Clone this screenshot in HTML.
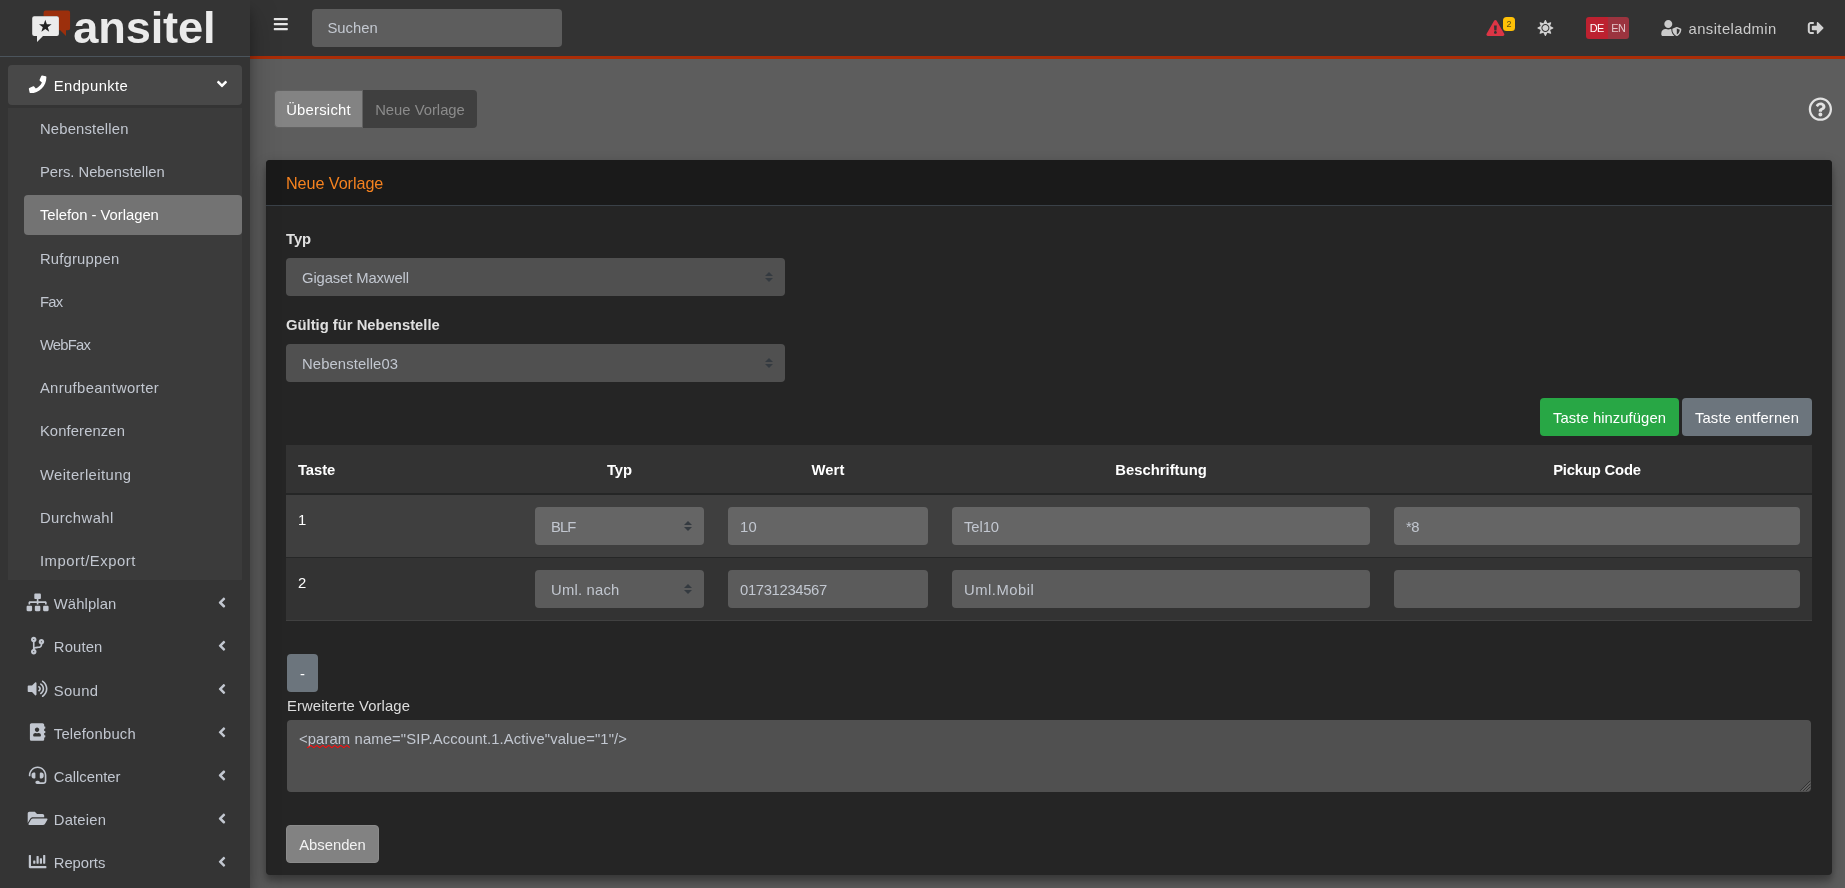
<!DOCTYPE html>
<html lang="de">
<head>
<meta charset="utf-8">
<title>ansitel - Telefon - Vorlagen</title>
<style>
*{box-sizing:border-box;margin:0;padding:0}
html,body{width:1845px;height:888px;overflow:hidden}
body{font-family:"Liberation Sans",sans-serif;font-size:14.8px;line-height:24px;color:#fff;background:#5d5d5d;position:relative}
.abs{position:absolute}
svg.ic{display:block;position:absolute}
.t{position:absolute;white-space:nowrap;line-height:24px;height:24px}
/* sidebar */
#sidebar{will-change:transform;position:absolute;left:0;top:0;width:250px;height:888px;background:#343434;z-index:30;box-shadow:0 14px 28px rgba(0,0,0,.25),0 10px 10px rgba(0,0,0,.22)}
#brand{position:absolute;left:0;top:0;width:250px;height:57px;border-bottom:1px solid #4b545c}
#brandtxt{position:absolute;left:73.3px;top:2.5px;font-weight:bold;font-size:45.2px;line-height:50px;color:#ebebeb;letter-spacing:-0.15px}
.ni{position:absolute;left:8px;width:234px;height:40px;border-radius:4px;color:#c2c7d0}
.ni .t{left:45.8px;top:9px}
.ni.open{background:#484848;color:#fff}
.ni .chev{position:absolute;left:210px;top:11.2px;width:8px;height:16px}
#tree{position:absolute;left:8px;top:108px;width:234px;height:472px;background:#3b3b3b}
.si{position:absolute;left:16px;width:218px;height:40px;border-radius:4px;color:#c2c7d0}
.si .t{left:15.9px;top:9px}
.si.act{background:#737373;color:#fff}
/* navbar */
#navbar{will-change:transform;position:absolute;left:250px;top:0;width:1595px;height:59px;background:#333;border-bottom:3px solid #aa2d07;z-index:20;color:#cbcbcb}
#search{position:absolute;left:62px;top:9px;width:250px;height:38px;border-radius:4px;background:#5d5d5d;color:#c4c9d1}
/* content */
#content{position:absolute;left:250px;top:59px;width:1595px;height:829px;background:#5d5d5d;z-index:10}
.btn{will-change:transform;position:absolute;height:38px;border-radius:4px;text-align:center;line-height:40px;white-space:nowrap;overflow:hidden}
#card{will-change:transform;position:absolute;left:266px;top:160px;width:1566px;height:715px;background:#252525;border-radius:4px;z-index:15;box-shadow:0 10px 20px rgba(0,0,0,.19),0 6px 6px rgba(0,0,0,.23),0 0 8px rgba(0,0,0,.1)}
#chead{position:absolute;left:0;top:0;width:1566px;height:46px;background:#1a1a1a;border-bottom:1px solid #3a4148;border-radius:4px 4px 0 0}
.inp{position:absolute;height:38px;border-radius:4px;background:rgba(255,255,255,.2);color:#c2c7d0}
.inp .t{left:16px;top:7.5px}
.inp.tx .t{left:12px}
.arr{position:absolute;right:12px;top:14px;width:8px;height:10px}
.lbl{font-weight:bold;color:#fff}

.sic{position:absolute;left:0;top:0;color:#c2c7d0;z-index:2}
.sic.w{color:#fff}

</style>
</head>
<body>
<aside id="sidebar">
 <div id="brand">
  <svg class="abs" style="left:30px;top:8px" width="44" height="38" viewBox="30 8 44 38">
   <path fill="#9c2f0c" d="M45.6 10.5H68.1a2 2 0 0 1 2 2V28.2a2 2 0 0 1-2 2H66V36L60.2 30.2H58V16.200H43.600V12.500a2 2 0 0 1 2-2z"/>
   <path fill="#ebebeb" d="M34.200 16.200H56.900a2 2 0 0 1 2 2V33.900a2 2 0 0 1-2 2H43L37 42V35.900H34.200a2 2 0 0 1-2-2V18.200a2 2 0 0 1 2-2z"/>
   <path fill="#222" d="M45.300 19.800l1.550 4.500h4.750l-3.800 2.850 1.400 4.550-3.900-2.750-3.900 2.750 1.400-4.550-3.800-2.850h4.750z"/>
  </svg>
  <div id="brandtxt">ansitel</div>
 </div>
 <div class="sic w"><svg class="ic" viewBox="-23.27 -14.55 552.73 552.73" width="19" height="19" style="left:28px;top:75px"><path fill="currentColor" d="M493.4 24.6l-104-24c-11.300-2.600-22.900 3.300-27.500 13.900l-48 112c-4.200 9.800-1.400 21.300 6.900 28l60.600 49.600c-36 76.700-98.900 140.500-177.200 177.200l-49.600-60.600c-6.800-8.300-18.200-11.100-28-6.900l-112 48C3.900 366.500-2 378.100.6 389.400l24 104C27.100 504.200 36.700 512 48 512c256.100 0 464-207.500 464-464 0-11.200-7.700-20.900-18.600-23.400z"/></svg></div><div class="ni open" style="top:65px"><span class="t" style="top:9.00px"><span style="letter-spacing:0.41px">Endpunkte</span></span><div class="chev" style="transform:rotate(-90deg)"><svg class="ic" viewBox="-0.00 -0.00 256.00 512.00" width="8" height="16" style="left:0px;top:0px"><path fill="currentColor" d="M31.7 239l136-136c9.4-9.4 24.6-9.4 33.9 0l22.6 22.6c9.4 9.4 9.4 24.6 0 33.9L127.9 256l96.4 96.4c9.4 9.4 9.4 24.6 0 33.9L201.7 409c-9.4 9.4-24.6 9.4-33.9 0l-136-136c-9.5-9.400-9.5-24.600-.1-34z"/></svg></div></div>
 <div id="tree">
  <div class="si" style="top:0.2px"><span class="t" style="top:8.80px"><span style="letter-spacing:0.20px">Nebenstellen</span></span></div>
  <div class="si" style="top:43.4px"><span class="t" style="top:8.60px"><span style="letter-spacing:-0.01px">Pers. Nebenstellen</span></span></div>
  <div class="si act" style="top:86.6px"><span class="t" style="top:8.40px"><span style="letter-spacing:-0.02px">Telefon - Vorlagen</span></span></div>
  <div class="si" style="top:129.800px"><span class="t" style="top:9.20px"><span style="letter-spacing:0.21px">Rufgruppen</span></span></div>
  <div class="si" style="top:173px"><span class="t" style="top:9.00px"><span style="letter-spacing:-0.65px">Fax</span></span></div>
  <div class="si" style="top:216.2px"><span class="t" style="top:8.80px"><span style="letter-spacing:-0.78px">WebFax</span></span></div>
  <div class="si" style="top:259.400px"><span class="t" style="top:8.60px"><span style="letter-spacing:0.36px">Anrufbeantworter</span></span></div>
  <div class="si" style="top:302.600px"><span class="t" style="top:8.40px"><span style="letter-spacing:0.11px">Konferenzen</span></span></div>
  <div class="si" style="top:345.800px"><span class="t" style="top:9.20px"><span style="letter-spacing:0.42px">Weiterleitung</span></span></div>
  <div class="si" style="top:389px"><span class="t" style="top:9.00px"><span style="letter-spacing:0.43px">Durchwahl</span></span></div>
  <div class="si" style="top:432.2px"><span class="t" style="top:8.80px"><span style="letter-spacing:0.56px">Import/Export</span></span></div>
 </div>
 <div class="sic"><svg class="ic" viewBox="-0.00 -19.20 256.00 544.00" width="8" height="17" style="left:218px;top:594px"><path fill="currentColor" d="M31.7 239l136-136c9.4-9.4 24.6-9.4 33.9 0l22.6 22.6c9.4 9.4 9.4 24.6 0 33.9L127.9 256l96.4 96.4c9.4 9.4 9.4 24.6 0 33.9L201.7 409c-9.4 9.4-24.6 9.4-33.9 0l-136-136c-9.5-9.400-9.5-24.600-.1-34z"/></svg><svg class="ic" viewBox="-17.45 -17.45 669.09 552.73" width="23" height="19" style="left:26px;top:593px"><path fill="currentColor" d="M128 352H32c-17.670 0-32 14.330-32 32v96c0 17.670 14.330 32 32 32h96c17.670 0 32-14.330 32-32v-96c0-17.670-14.330-32-32-32zm-24-80h192v48h48v-48h192v48h48v-57.590c0-21.170-17.230-38.410-38.410-38.410H344v-64h40c17.670 0 32-14.330 32-32V32c0-17.670-14.330-32-32-32H256c-17.670 0-32 14.330-32 32v96c0 17.670 14.330 32 32 32h40v64H94.410C73.230 224 56 241.230 56 262.410V320h48v-48zm264 80h-96c-17.670 0-32 14.330-32 32v96c0 17.670 14.330 32 32 32h96c17.670 0 32-14.330 32-32v-96c0-17.670-14.330-32-32-32zm240 0h-96c-17.670 0-32 14.330-32 32v96c0 17.670 14.330 32 32 32h96c17.670 0 32-14.330 32-32v-96c0-17.670-14.330-32-32-32z"/></svg></div><div class="ni" style="top:583.400px"><span class="t" style="top:8.60px"><span style="letter-spacing:0.11px">Wählplan</span></span></div>
 <div class="sic"><svg class="ic" viewBox="-0.00 -25.60 256.00 544.00" width="8" height="17" style="left:218px;top:637px"><path fill="currentColor" d="M31.7 239l136-136c9.4-9.4 24.6-9.4 33.9 0l22.6 22.6c9.4 9.4 9.4 24.6 0 33.9L127.9 256l96.4 96.4c9.4 9.4 9.4 24.6 0 33.9L201.7 409c-9.4 9.4-24.6 9.4-33.9 0l-136-136c-9.5-9.400-9.5-24.600-.1-34z"/></svg><svg class="ic" viewBox="-0.00 -23.27 407.27 552.73" width="14" height="19" style="left:31px;top:636px"><path fill="currentColor" d="M384 144c0-44.200-35.800-80-80-80s-80 35.800-80 80c0 36.400 24.300 67.100 57.500 76.800-.6 16.100-4.200 28.500-11 36.900-15.400 19.200-49.300 22.400-85.200 25.700-28.200 2.600-57.400 5.400-81.300 16.900v-144c32.500-10.200 56-40.500 56-76.300 0-44.200-35.800-80-80-80S0 35.800 0 80c0 35.800 23.500 66.100 56 76.300v199.300C23.500 365.900 0 396.200 0 432c0 44.200 35.800 80 80 80s80-35.800 80-80c0-34-21.200-63.100-51.200-74.600 3.100-5.200 7.800-9.800 14.900-13.400 16.200-8.200 40.400-10.400 66.100-12.800 42.200-3.900 90-8.400 118.200-43.400 14-17.400 21.100-39.800 21.600-67.900 31.600-10.800 54.400-40.700 54.400-75.900zM80 64c8.800 0 16 7.200 16 16s-7.200 16-16 16-16-7.200-16-16 7.200-16 16-16zm0 384c-8.800 0-16-7.200-16-16s7.200-16 16-16 16 7.200 16 16-7.200 16-16 16zm224-320c8.800 0 16 7.200 16 16s-7.200 16-16 16-16-7.200-16-16 7.200-16 16-16z"/></svg></div><div class="ni" style="top:626.600px"><span class="t" style="top:8.40px"><span style="letter-spacing:0.16px">Routen</span></span></div>
 <div class="sic"><svg class="ic" viewBox="-0.00 -0.00 256.00 512.00" width="8" height="16" style="left:218px;top:681px"><path fill="currentColor" d="M31.7 239l136-136c9.4-9.4 24.6-9.4 33.9 0l22.6 22.6c9.4 9.4 9.4 24.6 0 33.9L127.9 256l96.4 96.4c9.4 9.4 9.4 24.6 0 33.9L201.7 409c-9.4 9.4-24.6 9.4-33.9 0l-136-136c-9.5-9.400-9.5-24.600-.1-34z"/></svg><svg class="ic" viewBox="-20.36 -0.00 610.91 523.64" width="21" height="18" style="left:27px;top:680px"><path fill="currentColor" d="M215.030 71.050L126.060 160H24c-13.260 0-24 10.740-24 24v144c0 13.250 10.740 24 24 24h102.060l88.970 88.950c15.030 15.030 40.970 4.470 40.970-16.970V88.020c0-21.460-25.960-31.980-40.970-16.970zm233.320-51.080c-11.170-7.330-26.180-4.240-33.510 6.950-7.340 11.170-4.220 26.180 6.950 33.510 66.270 43.490 105.820 116.600 105.820 195.580 0 78.980-39.550 152.090-105.820 195.580-11.170 7.320-14.290 22.340-6.950 33.500 7.040 10.710 21.930 14.560 33.510 6.950C528.270 439.580 576 351.330 576 256S528.270 72.430 448.350 19.970zM480 256c0-63.530-32.060-121.940-85.770-156.240-11.190-7.140-26.030-3.820-33.120 7.460s-3.780 26.210 7.410 33.360C408.270 165.970 432 209.110 432 256s-23.730 90.030-63.480 115.420c-11.190 7.140-14.500 22.070-7.410 33.360 6.510 10.360 21.120 15.140 33.120 7.460C447.940 377.940 480 319.540 480 256zm-141.770-76.870c-11.580-6.330-26.190-2.160-32.610 9.450-6.390 11.610-2.160 26.200 9.450 32.610C327.980 228.280 336 241.630 336 256c0 14.380-8.020 27.720-20.920 34.810-11.610 6.410-15.840 21-9.450 32.610 6.430 11.660 21.050 15.800 32.610 9.450 28.230-15.550 45.770-45 45.770-76.880s-17.540-61.320-45.780-76.860z"/></svg></div><div class="ni" style="top:669.800px"><span class="t" style="top:9.20px"><span style="letter-spacing:0.35px">Sound</span></span></div>
 <div class="sic"><svg class="ic" viewBox="-0.00 -6.40 256.00 544.00" width="8" height="17" style="left:218px;top:724px"><path fill="currentColor" d="M31.7 239l136-136c9.4-9.4 24.6-9.4 33.9 0l22.6 22.6c9.4 9.4 9.4 24.6 0 33.9L127.9 256l96.4 96.4c9.4 9.4 9.4 24.6 0 33.9L201.7 409c-9.4 9.4-24.6 9.4-33.9 0l-136-136c-9.5-9.400-9.5-24.600-.1-34z"/></svg><svg class="ic" viewBox="-26.18 -5.82 494.55 523.64" width="17" height="18" style="left:29px;top:723px"><path fill="currentColor" d="M436 160c6.600 0 12-5.400 12-12v-40c0-6.600-5.400-12-12-12h-20V48c0-26.500-21.500-48-48-48H48C21.500 0 0 21.500 0 48v416c0 26.500 21.500 48 48 48h320c26.500 0 48-21.500 48-48v-48h20c6.600 0 12-5.400 12-12v-40c0-6.600-5.400-12-12-12h-20v-64h20c6.600 0 12-5.400 12-12v-40c0-6.600-5.400-12-12-12h-20v-64h20zm-228-32c35.300 0 64 28.700 64 64s-28.700 64-64 64-64-28.700-64-64 28.700-64 64-64zm112 236.800c0 10.600-10 19.200-22.400 19.200H118.400C106 384 96 375.400 96 364.800v-19.200c0-31.800 30.100-57.600 67.200-57.600h5c12.300 5.100 25.700 8 39.800 8s27.600-2.900 39.800-8h5c37.100 0 67.200 25.800 67.200 57.600v19.200z"/></svg></div><div class="ni" style="top:713px"><span class="t" style="top:9.00px"><span style="letter-spacing:0.21px">Telefonbuch</span></span></div>
 <div class="sic"><svg class="ic" viewBox="-0.00 -12.80 256.00 544.00" width="8" height="17" style="left:218px;top:767px"><path fill="currentColor" d="M31.7 239l136-136c9.4-9.4 24.6-9.4 33.9 0l22.6 22.6c9.4 9.4 9.4 24.6 0 33.9L127.9 256l96.4 96.4c9.4 9.4 9.4 24.6 0 33.9L201.7 409c-9.4 9.4-24.6 9.4-33.9 0l-136-136c-9.5-9.400-9.5-24.600-.1-34z"/></svg><svg class="ic" viewBox="-23.27 -11.64 552.73 523.64" width="19" height="18" style="left:28px;top:766px"><path fill="currentColor" d="M192 208c0-17.670-14.330-32-32-32h-16c-35.350 0-64 28.650-64 64v48c0 35.350 28.650 64 64 64h16c17.670 0 32-14.330 32-32V208zm176 144c35.350 0 64-28.650 64-64v-48c0-35.350-28.650-64-64-64h-16c-17.670 0-32 14.330-32 32v112c0 17.670 14.330 32 32 32h16zM256 0C113.180 0 4.580 118.830 0 256v16c0 8.840 7.160 16 16 16h16c8.840 0 16-7.160 16-16v-16c0-114.690 93.310-208 208-208s208 93.310 208 208h-.12c.08 2.430.12 165.720.12 165.720 0 23.350-18.930 42.280-42.280 42.280H320c0-26.510-21.490-48-48-48h-32c-26.510 0-48 21.490-48 48s21.490 48 48 48h181.720c49.860 0 90.280-40.420 90.280-90.280V256C507.420 118.830 398.820 0 256 0z"/></svg></div><div class="ni" style="top:756.2px"><span class="t" style="top:8.80px"><span style="letter-spacing:0.01px">Callcenter</span></span></div>
 <div class="sic"><svg class="ic" viewBox="-0.00 -19.20 256.00 544.00" width="8" height="17" style="left:218px;top:810px"><path fill="currentColor" d="M31.7 239l136-136c9.4-9.4 24.6-9.4 33.9 0l22.6 22.6c9.4 9.4 9.4 24.6 0 33.9L127.9 256l96.4 96.4c9.4 9.4 9.4 24.6 0 33.9L201.7 409c-9.4 9.4-24.6 9.4-33.9 0l-136-136c-9.5-9.400-9.5-24.600-.1-34z"/></svg><svg class="ic" viewBox="-20.36 -17.45 610.91 552.73" width="21" height="19" style="left:27px;top:809px"><path fill="currentColor" d="M572.694 292.093L500.270 416.248A63.997 63.997 0 0 1 444.989 448H45.025c-18.523 0-30.064-20.093-20.731-36.093l72.424-124.155A64 64 0 0 1 152 256h399.964c18.523 0 30.064 20.093 20.730 36.093zM152 224h328v-48c0-26.510-21.490-48-48-48H272l-64-64H48C21.490 64 0 85.490 0 112v278.046l69.077-118.418C86.214 242.250 117.989 224 152 224z"/></svg></div><div class="ni" style="top:799.400px"><span class="t" style="top:8.60px"><span style="letter-spacing:0.18px">Dateien</span></span></div>
 <div class="sic"><svg class="ic" viewBox="-0.00 -25.60 256.00 544.00" width="8" height="17" style="left:218px;top:853px"><path fill="currentColor" d="M31.7 239l136-136c9.4-9.4 24.6-9.4 33.9 0l22.6 22.6c9.4 9.4 9.4 24.6 0 33.9L127.9 256l96.4 96.4c9.4 9.4 9.4 24.6 0 33.9L201.7 409c-9.4 9.4-24.6 9.4-33.9 0l-136-136c-9.5-9.400-9.5-24.600-.1-34z"/></svg><svg class="ic" viewBox="-23.27 -23.27 552.73 552.73" width="19" height="19" style="left:28px;top:852px"><path fill="currentColor" d="M332.800 320h38.400c6.400 0 12.800-6.400 12.800-12.800V172.800c0-6.400-6.400-12.800-12.800-12.800h-38.400c-6.400 0-12.800 6.400-12.800 12.800v134.400c0 6.400 6.400 12.800 12.800 12.800zm96 0h38.400c6.400 0 12.800-6.400 12.800-12.800V76.800c0-6.400-6.400-12.800-12.800-12.800h-38.400c-6.400 0-12.800 6.400-12.800 12.800v230.400c0 6.400 6.400 12.800 12.800 12.800zm-288 0h38.400c6.400 0 12.800-6.400 12.800-12.800v-70.400c0-6.400-6.400-12.800-12.800-12.800h-38.400c-6.400 0-12.800 6.400-12.800 12.800v70.400c0 6.400 6.400 12.800 12.800 12.800zm96 0h38.400c6.400 0 12.800-6.400 12.800-12.800V108.800c0-6.400-6.400-12.800-12.800-12.800h-38.400c-6.400 0-12.800 6.400-12.800 12.800v198.400c0 6.400 6.400 12.800 12.800 12.800zM496 384H64V80c0-8.840-7.160-16-16-16H16C7.160 64 0 71.160 0 80v336c0 17.670 14.330 32 32 32h464c8.840 0 16-7.160 16-16v-32c0-8.840-7.160-16-16-16z"/></svg></div><div class="ni" style="top:842.600px"><span class="t" style="top:8.40px"><span style="letter-spacing:-0.05px">Reports</span></span></div>
</aside>

<header id="navbar">
 <div class="abs" style="left:0;top:0;width:14px;height:16px;color:#e6e6e6"><svg class="ic" viewBox="-25.60 -0.00 480.00 512.00" width="15" height="16" style="left:23px;top:16px"><path fill="currentColor" d="M16 132h416c8.837 0 16-7.163 16-16V76c0-8.837-7.163-16-16-16H16C7.163 60 0 67.163 0 76v40c0 8.837 7.163 16 16 16zm0 160h416c8.837 0 16-7.163 16-16v-40c0-8.837-7.163-16-16-16H16c-8.837 0-16 7.163-16 16v40c0 8.837 7.163 16 16 16zm0 160h416c8.837 0 16-7.163 16-16v-40c0-8.837-7.163-16-16-16H16c-8.837 0-16 7.163-16 16v40c0 8.837 7.163 16 16 16z"/></svg></div>
 <div id="search"><span class="t" style="left:15.5px;top:6.5px">Suchen</span></div>
 <div class="abs" style="left:0;top:0;color:#dc3545"><svg class="ic" viewBox="-12.80 -28.80 608.00 544.00" width="19" height="17" style="left:1236px;top:19px"><path fill="currentColor" d="M569.517 440.013C587.975 472.007 564.806 512 527.940 512H48.054c-36.937 0-59.999-40.055-41.577-71.987L246.423 23.985c18.467-32.009 64.720-31.951 83.154 0l239.940 416.028zM288 354c-25.405 0-46 20.595-46 46s20.595 46 46 46 46-20.595 46-46-20.595-46-46-46zm-43.673-165.346l7.418 136c.347 6.364 5.609 11.346 11.982 11.346h48.546c6.373 0 11.635-4.982 11.982-11.346l7.418-136c.375-6.874-5.098-12.654-11.982-12.654h-63.383c-6.884 0-12.356 5.780-11.981 12.654z"/></svg></div>
 <div class="abs" style="left:1253px;top:17px;width:12px;height:14px;border-radius:3.500px;background:#ffc107;color:#5a4e14;font-size:9px;line-height:14px;text-align:center">2</div>
 <div class="abs" style="left:0;top:0;color:#d2d2d2"><svg class="ic" viewBox="-12.80 -0.00 544.00 512.00" width="17" height="16" style="left:1287px;top:20px"><path fill="currentColor" d="M256 160c-52.900 0-96 43.100-96 96s43.100 96 96 96 96-43.100 96-96-43.100-96-96-96zm246.400 80.500l-94.700-47.300 33.500-100.400c4.500-13.600-8.400-26.500-21.900-21.900l-100.400 33.500-47.400-94.800c-6.400-12.800-24.600-12.800-31 0l-47.300 94.700L92.700 70.800c-13.600-4.500-26.500 8.400-21.900 21.900l33.500 100.400-94.700 47.400c-12.800 6.400-12.800 24.600 0 31l94.700 47.300-33.500 100.500c-4.500 13.600 8.400 26.500 21.900 21.900l100.400-33.500 47.300 94.700c6.400 12.800 24.600 12.800 31 0l47.300-94.700 100.400 33.500c13.600 4.500 26.500-8.400 21.900-21.900l-33.500-100.400 94.700-47.300c13-6.500 13-24.700.2-31.100zm-155.900 106c-49.900 49.900-131.100 49.900-181 0-49.900-49.900-49.900-131.100 0-181 49.900-49.900 131.100-49.900 181 0 49.900 49.900 49.900 131.100 0 181z"/></svg></div>
 <div class="abs" style="left:1336px;top:17px;width:22px;height:22px;border-radius:3px 0 0 3px;background:#bd2130;color:#fff;font-size:10.900px;line-height:22px;text-align:center;letter-spacing:-0.6px;text-indent:-0.6px">DE</div>
 <div class="abs" style="left:1358px;top:17px;width:21px;height:22px;border-radius:0 3px 3px 0;background:#9b343f;color:#e3c6c9;font-size:10.900px;line-height:22px;text-align:center;letter-spacing:-0.4px;text-indent:-0.4px">EN</div>
 <div class="abs" style="left:0;top:0;color:#cbcbcb"><svg class="ic" viewBox="-9.60 -0.00 672.00 512.00" width="21" height="16" style="left:1411px;top:20px"><path fill="currentColor" d="M622.300 271.100l-115.200-45c-4.100-1.600-12.600-3.700-22.200 0l-115.200 45c-10.700 4.200-17.700 14-17.700 24.900 0 111.600 68.700 188.800 132.900 213.900 9.600 3.700 18 1.600 22.200 0C558.400 489.900 640 420.500 640 296c0-10.900-7-20.700-17.700-24.900zM496 462.400V273.300l95.500 37.300c-5.600 87.100-60.900 135.400-95.500 151.800zM224 256c70.700 0 128-57.300 128-128S294.700 0 224 0 96 57.300 96 128s57.300 128 128 128zm96 40c0-2.500.8-4.800 1.100-7.200-2.500-.1-4.900-.8-7.500-.8h-16.700c-22.200 10.200-46.900 16-72.900 16s-50.600-5.800-72.900-16h-16.700C60.200 288 0 348.200 0 422.400V464c0 26.500 21.500 48 48 48h352c6.800 0 13.300-1.500 19.200-4-54-42.900-99.200-116.700-99.200-212z"/></svg></div>
 <span class="t" style="left:1438.500px;top:17px"><span style="letter-spacing:0.43px">ansiteladmin</span></span>
 <div class="abs" style="left:0;top:0;color:#d2d2d2"><svg class="ic" viewBox="-25.60 -0.00 544.00 512.00" width="17" height="16" style="left:1557px;top:20px"><path fill="currentColor" d="M497 273L329 441c-15 15-41 4.500-41-17v-96H152c-13.300 0-24-10.700-24-24v-96c0-13.300 10.700-24 24-24h136V88c0-21.400 25.900-32 41-17l168 168c9.300 9.400 9.300 24.600 0 34zM192 436v-40c0-6.600-5.400-12-12-12H96c-17.700 0-32-14.300-32-32V160c0-17.700 14.300-32 32-32h84c6.600 0 12-5.400 12-12V76c0-6.600-5.400-12-12-12H96c-53 0-96 43-96 96v192c0 53 43 96 96 96h84c6.600 0 12-5.400 12-12z"/></svg></div>
</header>

<main id="content"></main>

<div class="btn" style="left:274px;top:90px;width:89px;border:1px solid #626262;background:#838383;border-radius:4px 0 0 4px;line-height:38px;z-index:15"><span style="letter-spacing:0.25px">Übersicht</span></div>
<div class="btn" style="left:363px;top:90px;width:114px;background:#3f3f3f;color:#8b8b8b;border-radius:0 4px 4px 0;z-index:15">Neue Vorlage</div>
<div class="abs" style="left:0;top:0;z-index:15;color:#e2e2e2"><svg class="ic" viewBox="-8.53 -5.33 533.33 533.33" width="25" height="25" style="left:1808px;top:97px"><path fill="currentColor" d="M256 8C119.043 8 8 119.083 8 256c0 136.997 111.043 248 248 248s248-111.003 248-248C504 119.083 392.957 8 256 8zm0 448c-110.532 0-200-89.431-200-200 0-110.495 89.472-200 200-200 110.491 0 200 89.471 200 200 0 110.530-89.431 200-200 200zm107.244-255.200c0 67.052-72.421 68.084-72.421 92.863V300c0 6.627-5.373 12-12 12h-45.647c-6.627 0-12-5.373-12-12v-8.659c0-35.745 27.100-50.034 47.579-61.516 17.561-9.845 28.324-16.541 28.324-29.579 0-17.246-21.999-28.693-39.784-28.693-23.189 0-33.894 10.977-48.942 29.969-4.057 5.120-11.460 6.071-16.666 2.124l-27.824-21.098c-5.107-3.872-6.251-11.066-2.644-16.363C184.846 131.491 214.940 112 261.794 112c49.071 0 101.450 38.304 101.450 88.800zM298 368c0 23.159-18.841 42-42 42s-42-18.841-42-42 18.841-42 42-42 42 18.841 42 42z"/></svg></div>

<section id="card">
 <div id="chead"><span class="t" style="left:20px;top:11px;font-size:16.200px;color:#f5821f"><span style="letter-spacing:-0.07px">Neue Vorlage</span></span></div>

 <span class="t lbl" style="left:20px;top:67px;color:#e0e0e0"><span style="letter-spacing:-0.05px">Typ</span></span>
 <div class="inp sel" style="left:20px;top:98px;width:499px"><span class="t"><span style="letter-spacing:-0.11px">Gigaset Maxwell</span></span><svg class="arr" viewBox="0 0 4 5"><path fill="#343a40" d="M2 0L0 2h4zm0 5L0 3h4z"/></svg></div>
 <span class="t lbl" style="left:20px;top:153px;color:#e0e0e0">Gültig für Nebenstelle</span>
 <div class="inp sel" style="left:20px;top:184px;width:499px"><span class="t"><span style="letter-spacing:0.12px">Nebenstelle03</span></span><svg class="arr" viewBox="0 0 4 5"><path fill="#343a40" d="M2 0L0 2h4zm0 5L0 3h4z"/></svg></div>

 <div class="btn" style="left:1274px;top:238px;width:139px;background:#28a745"><span style="letter-spacing:0.07px">Taste hinzufügen</span></div>
 <div class="btn" style="left:1416px;top:238px;width:130px;background:#6c757d"><span style="letter-spacing:0.14px">Taste entfernen</span></div>

 <div class="abs" style="left:20px;top:285px;width:1526px;height:176px;background:#333">
  <div class="abs" style="left:0;top:0;width:1526px;height:50px;border-bottom:2px solid #252626"></div>
  <div class="abs" style="left:0;top:50px;width:1526px;height:63px;background:#3f3f3f;border-bottom:1px solid #262727"></div>
  <div class="abs" style="left:0;top:113px;width:1526px;height:63px;border-bottom:1px solid #414141"></div>
  <span class="t lbl" style="left:12px;top:13px"><span style="letter-spacing:-0.07px">Taste</span></span>
  <span class="t lbl" style="left:237px;top:12px;width:193px;text-align:center;margin-top:1px"><span style="letter-spacing:-0.05px">Typ</span></span>
  <span class="t lbl" style="left:430px;top:12px;width:224px;text-align:center;margin-top:1px"><span style="letter-spacing:0.13px">Wert</span></span>
  <span class="t lbl" style="left:654px;top:12px;width:442px;text-align:center;margin-top:1px"><span style="letter-spacing:0.02px">Beschriftung</span></span>
  <span class="t lbl" style="left:1096px;top:12px;width:430px;text-align:center;margin-top:1px"><span style="letter-spacing:-0.17px">Pickup Code</span></span>

  <span class="t" style="left:12px;top:63px">1</span>
  <div class="inp sel" style="left:249px;top:62px;width:169px"><span class="t"><span style="letter-spacing:-0.90px">BLF</span></span><svg class="arr" viewBox="0 0 4 5"><path fill="#343a40" d="M2 0L0 2h4zm0 5L0 3h4z"/></svg></div>
  <div class="inp tx" style="left:442px;top:62px;width:200px"><span class="t"><span style="letter-spacing:0.20px">10</span></span></div>
  <div class="inp tx" style="left:666px;top:62px;width:418px"><span class="t"><span style="letter-spacing:-0.07px">Tel10</span></span></div>
  <div class="inp tx" style="left:1108px;top:62px;width:406px"><span class="t"><span style="letter-spacing:-0.60px">*8</span></span></div>

  <span class="t" style="left:12px;top:126px">2</span>
  <div class="inp sel" style="left:249px;top:125px;width:169px"><span class="t"><span style="letter-spacing:0.20px">Uml. nach</span></span><svg class="arr" viewBox="0 0 4 5"><path fill="#343a40" d="M2 0L0 2h4zm0 5L0 3h4z"/></svg></div>
  <div class="inp tx" style="left:442px;top:125px;width:200px"><span class="t"><span style="letter-spacing:-0.33px">01731234567</span></span></div>
  <div class="inp tx" style="left:666px;top:125px;width:418px"><span class="t"><span style="letter-spacing:0.51px">Uml.Mobil</span></span></div>
  <div class="inp tx" style="left:1108px;top:125px;width:406px"></div>
 </div>

 <div class="btn" style="left:21px;top:494px;width:31px;background:#6c757d">-</div>
 <span class="t" style="left:21px;top:534px;color:#dedede"><span style="letter-spacing:0.12px">Erweiterte Vorlage</span></span>
 <div class="inp tx" style="left:21px;top:560px;width:1524px;height:72px"><span class="t" style="top:7px;letter-spacing:0.12px">&lt;param name="SIP.Account.1.Active"value="1"/&gt;</span>
  <svg class="abs" style="left:0;top:0" width="80" height="40" viewBox="0 0 80 40"><path fill="none" stroke="#ff0a0a" stroke-width="1.1" stroke-linejoin="round" d="M20.0 27.3 L20.8 27.6 L23.8 25.4 L26.8 27.6 L29.8 25.4 L32.8 27.6 L35.8 25.4 L38.8 27.6 L41.8 25.4 L44.8 27.6 L47.8 25.4 L50.8 27.6 L53.8 25.4 L56.8 27.6 L59.8 25.4 L62.8 27.6"/></svg>
  <svg class="abs" style="right:0;bottom:1px" width="12" height="12" viewBox="0 0 12 12"><path stroke="#2f2f2f" stroke-width="0.9" fill="none" d="M1.200 11.800L11.200 1.800M4.200 11.800L11.200 4.800M7.200 11.800L11.200 7.800"/><path stroke="#747474" stroke-width="0.9" fill="none" d="M2.700 11.800L11.200 3.300M5.700 11.800L11.200 6.300M8.700 11.800L11.200 9.300"/></svg>
 </div>
 <div class="btn" style="left:20px;top:665px;width:93px;background:#828282;border:1px solid #8b8b8b;color:#f2f2f2;line-height:38px">Absenden</div>
</section>

</body>
</html>
